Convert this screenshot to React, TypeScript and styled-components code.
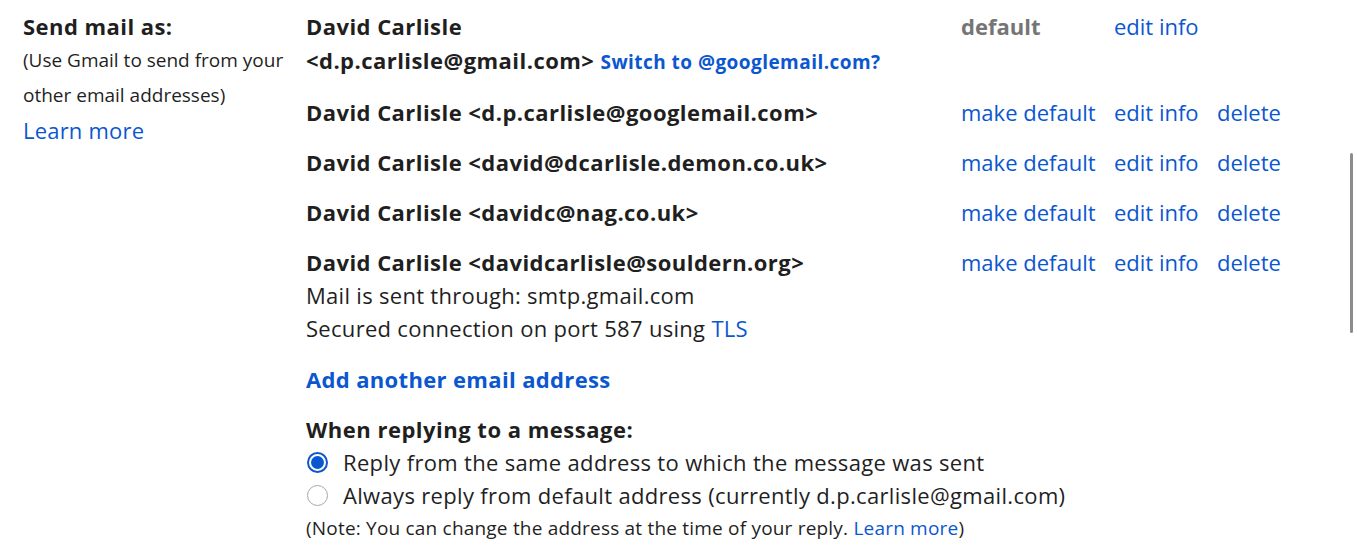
import React from "react";
import styled, { createGlobalStyle } from "styled-components";

const Global = createGlobalStyle`
  html, body { margin: 0; padding: 0; background: #fff; }
  body { font-family: "Open Sans", Roboto, Arial, sans-serif; color: #1f1f1f; overflow: hidden; }
`;

const Page = styled.div`
  position: relative;
  width: 1357px;
  height: 550px;
  display: flex;
  padding-top: 9px;
  box-sizing: border-box;
`;

const LabelCol = styled.div`
  width: 306px;
  padding-left: 23px;
  box-sizing: border-box;
  flex-shrink: 0;
`;

const Title = styled.div`
  font-size: 22px;
  font-weight: 700;
  line-height: 34px;
  letter-spacing: 0.45px;
`;

const Hint = styled.div`
  font-size: 19px;
  line-height: 35px;
  color: #1f1f1f;
`;

const Link = styled.a<{ $bold?: boolean; $size?: number }>`
  color: #0b57d0;
  text-decoration: none;
  cursor: pointer;
  font-weight: ${(p) => (p.$bold ? 700 : 400)};
  ${(p) => (p.$size ? `font-size: ${p.$size}px;` : "")}
`;

const LearnMore = styled(Link)`
  display: block;
  font-size: 22px;
  line-height: 34px;
  letter-spacing: 0.2px;
`;

const Main = styled.div`
  flex: 1;
  display: flex;
  flex-direction: column;
`;

const AddressTable = styled.div`
  display: grid;
  grid-template-columns: 655px 153px 103px auto;
  row-gap: 16px;
  font-size: 22px;
  line-height: 34px;
`;

const Address = styled.div`
  font-weight: 700;
  letter-spacing: 0.45px;
`;

const Cell = styled.div<{ $muted?: boolean }>`
  font-weight: ${(p) => (p.$muted ? 700 : 400)};
  color: ${(p) => (p.$muted ? "#757575" : "inherit")};
`;

const Detail = styled.div`
  font-weight: 400;
  line-height: 33px;
  letter-spacing: 0.3px;
`;

const AddLink = styled(Link)`
  display: block;
  font-size: 22px;
  font-weight: 700;
  line-height: 34px;
  margin-top: 17px;
  letter-spacing: 0.35px;
`;

const Section = styled.div`
  margin-top: 16px;
  font-size: 22px;
`;

const SectionTitle = styled.div`
  font-weight: 700;
  line-height: 34px;
  letter-spacing: 0.5px;
`;

const RadioRow = styled.label`
  display: flex;
  align-items: center;
  gap: 15px;
  line-height: 33px;
  margin-left: 1px;
  letter-spacing: 0.33px;
`;

const Radio = styled.span<{ $checked?: boolean }>`
  width: 21px;
  height: 21px;
  box-sizing: border-box;
  border-radius: 50%;
  border-style: solid;
  border-color: ${(p) => (p.$checked ? "#0b57d0" : "#a8a8a8")};
  border-width: ${(p) => (p.$checked ? 2 : 1)}px;
  display: flex;
  align-items: center;
  justify-content: center;
  flex-shrink: 0;
  &::after {
    content: "";
    width: 13px;
    height: 13px;
    border-radius: 50%;
    background: ${(p) => (p.$checked ? "#0b57d0" : "transparent")};
  }
`;

const Note = styled.div`
  font-size: 19px;
  line-height: 32px;
  letter-spacing: 0.2px;
`;

const Scrollbar = styled.div`
  position: absolute;
  right: 4px;
  top: 153px;
  width: 3px;
  height: 180px;
  background: #8c8c8c;
  border-radius: 2px;
`;

const rows = [
  "David Carlisle <d.p.carlisle@googlemail.com>",
  "David Carlisle <david@dcarlisle.demon.co.uk>",
  "David Carlisle <davidc@nag.co.uk>",
];

export default function App() {
  return (
    <>
      <Global />
      <Page>
        <LabelCol>
          <Title>Send mail as:</Title>
          <Hint>
            (Use Gmail to send from your
            <br />
            other email addresses)
          </Hint>
          <LearnMore>Learn more</LearnMore>
        </LabelCol>
        <Main>
          <AddressTable>
            <Address>
              David Carlisle
              <br />
              &lt;d.p.carlisle@gmail.com&gt;{" "}
              <Link $bold $size={19}>
                Switch to @googlemail.com?
              </Link>
            </Address>
            <Cell $muted>default</Cell>
            <Cell>
              <Link>edit info</Link>
            </Cell>
            <Cell />
            {rows.map((r) => (
              <React.Fragment key={r}>
                <Address>{r}</Address>
                <Cell>
                  <Link>make default</Link>
                </Cell>
                <Cell>
                  <Link>edit info</Link>
                </Cell>
                <Cell>
                  <Link>delete</Link>
                </Cell>
              </React.Fragment>
            ))}
            <Address>
              David Carlisle &lt;davidcarlisle@souldern.org&gt;
              <Detail>Mail is sent through: smtp.gmail.com</Detail>
              <Detail>
                Secured connection on port 587 using <Link>TLS</Link>
              </Detail>
            </Address>
            <Cell>
              <Link>make default</Link>
            </Cell>
            <Cell>
              <Link>edit info</Link>
            </Cell>
            <Cell>
              <Link>delete</Link>
            </Cell>
          </AddressTable>
          <AddLink>Add another email address</AddLink>
          <Section>
            <SectionTitle>When replying to a message:</SectionTitle>
            <RadioRow>
              <Radio $checked />
              Reply from the same address to which the message was sent
            </RadioRow>
            <RadioRow>
              <Radio />
              Always reply from default address (currently d.p.carlisle@gmail.com)
            </RadioRow>
            <Note>
              (Note: You can change the address at the time of your reply.{" "}
              <Link>Learn more</Link>)
            </Note>
          </Section>
        </Main>
        <Scrollbar />
      </Page>
    </>
  );
}
